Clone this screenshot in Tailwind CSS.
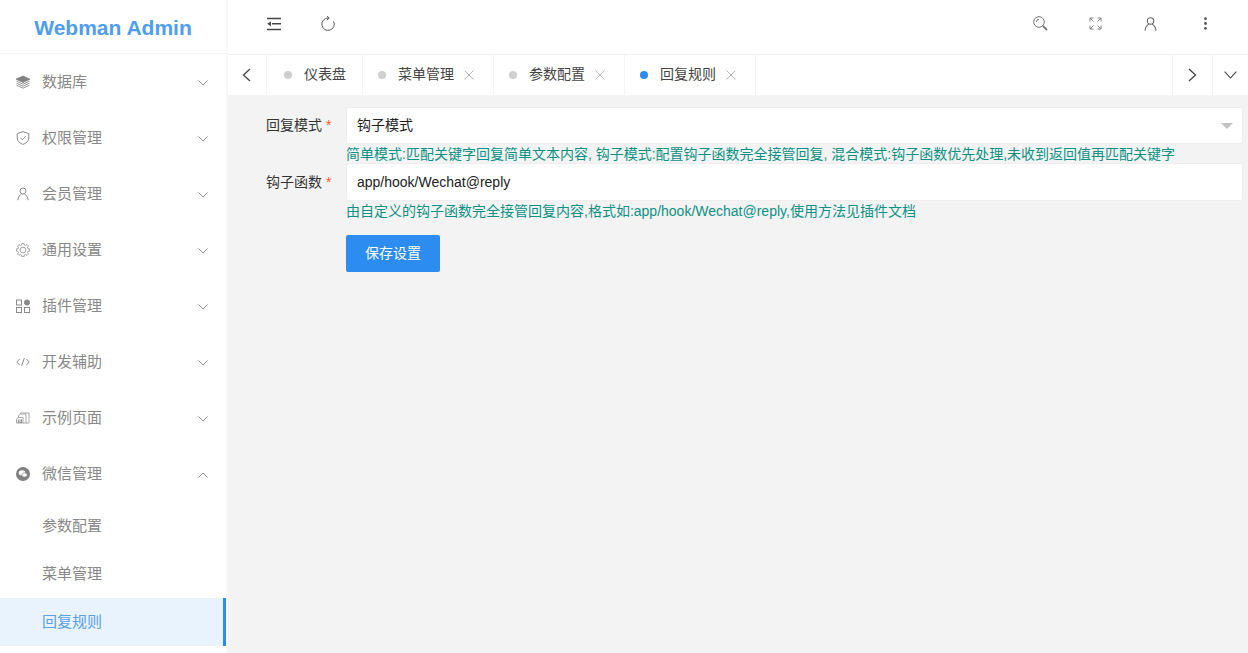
<!DOCTYPE html>
<html lang="zh">
<head>
<meta charset="utf-8">
<title>Webman Admin</title>
<script src="https://cdn.jsdelivr.net/npm/@tailwindcss/browser@4"></script>
</head>
<body class="m-0 overflow-hidden">
<div class="flex w-[1248px] h-[653px] overflow-hidden bg-[#f3f3f3] text-[14px] text-[#333] font-['Liberation_Sans','Noto_Sans_CJK_SC',sans-serif]">
  <aside class="w-[228px] shrink-0 h-full bg-white border-r-2 border-[#f8f8f8] flex flex-col">
    <div class="h-[54px] shrink-0 border-b border-[#f4f4f4] flex items-center justify-center text-[#4f9df0] text-[21px] font-bold pt-[3px]">Webman Admin</div>
    <nav class="flex flex-col text-[15px]">
      <div class="h-[56px] flex items-center pl-[16px] pr-[18px] text-[#888]">
        <svg class="w-[14px] h-[14px] mr-[12px]" viewBox="0 0 14 14" fill="none" stroke="#8a8a8a" stroke-width="0.9"><path d="M7 1 L14 4.2 L7 7.4 L0 4.2Z" fill="#808080"/><path d="M0.5 6.2 L7 9.2 L13.5 6.2M0.5 8.2 L7 11.2 L13.5 8.2M0.5 10.2 L7 13.2 L13.5 10.2"/></svg>
        <span class="flex-1">数据库</span>
        <svg class="w-[10px] h-[6px] mt-[2px]" viewBox="0 0 10 6" fill="none" stroke="#8f8f8f"><path d="M0.5 0.5 L5 5 L9.5 0.5"/></svg>
      </div>
      <div class="h-[56px] flex items-center pl-[16px] pr-[18px] text-[#888]">
        <svg class="w-[14px] h-[14px] mr-[12px]" viewBox="0 0 14 14" fill="none" stroke="#8a8a8a"><path d="M7 0.7 L12.8 2.6 V7 C12.8 10.2 10 12.3 7 13.4 C4 12.3 1.2 10.2 1.2 7 V2.6Z"/><path d="M4.4 6.8 L6.4 8.8 L9.8 5.2"/></svg>
        <span class="flex-1">权限管理</span>
        <svg class="w-[10px] h-[6px] mt-[2px]" viewBox="0 0 10 6" fill="none" stroke="#8f8f8f"><path d="M0.5 0.5 L5 5 L9.5 0.5"/></svg>
      </div>
      <div class="h-[56px] flex items-center pl-[16px] pr-[18px] text-[#888]">
        <svg class="w-[14px] h-[14px] mr-[12px]" viewBox="0 0 14 14" fill="none" stroke="#8a8a8a"><circle cx="7" cy="4" r="3"/><path d="M1.8 13.2 C2.2 9.8 4 7.6 5.4 7.1M12.2 13.2 C11.8 9.8 10 7.6 8.6 7.1"/></svg>
        <span class="flex-1">会员管理</span>
        <svg class="w-[10px] h-[6px] mt-[2px]" viewBox="0 0 10 6" fill="none" stroke="#8f8f8f"><path d="M0.5 0.5 L5 5 L9.5 0.5"/></svg>
      </div>
      <div class="h-[56px] flex items-center pl-[16px] pr-[18px] text-[#888]">
        <svg class="w-[14px] h-[14px] mr-[12px]" viewBox="0 0 14 14" fill="none" stroke="#8a8a8a" stroke-width="0.8"><path d="M13.72 5.94 V8.06 L12.05 8.26 L11.46 9.68 L12.5 11 L11 12.5 L9.68 11.46 L8.26 12.05 L8.06 13.72 H5.94 L5.74 12.05 L4.32 11.46 L3 12.5 L1.5 11 L2.54 9.68 L1.95 8.26 L0.28 8.06 V5.94 L1.95 5.74 L2.54 4.32 L1.5 3 L3 1.5 L4.32 2.54 L5.74 1.95 L5.94 0.28 H8.06 L8.26 1.95 L9.68 2.54 L11 1.5 L12.5 3 L11.46 4.32 L12.05 5.74Z"/><circle cx="7" cy="7" r="2.9"/></svg>
        <span class="flex-1">通用设置</span>
        <svg class="w-[10px] h-[6px] mt-[2px]" viewBox="0 0 10 6" fill="none" stroke="#8f8f8f"><path d="M0.5 0.5 L5 5 L9.5 0.5"/></svg>
      </div>
      <div class="h-[56px] flex items-center pl-[16px] pr-[18px] text-[#888]">
        <svg class="w-[14px] h-[14px] mr-[12px]" viewBox="0 0 14 14" fill="none" stroke="#8a8a8a"><rect x="0.5" y="1" width="5" height="5"/><rect x="0.5" y="8.5" width="5" height="5"/><rect x="8.5" y="8.5" width="5" height="5"/><circle cx="11" cy="3.5" r="2.6" fill="#8a8a8a"/></svg>
        <span class="flex-1">插件管理</span>
        <svg class="w-[10px] h-[6px] mt-[2px]" viewBox="0 0 10 6" fill="none" stroke="#8f8f8f"><path d="M0.5 0.5 L5 5 L9.5 0.5"/></svg>
      </div>
      <div class="h-[56px] flex items-center pl-[16px] pr-[18px] text-[#888]">
        <svg class="w-[14px] h-[14px] mr-[12px]" viewBox="0 0 14 14" fill="none" stroke="#8a8a8a"><path d="M3.6 4 L0.8 7 L3.6 10M10.4 4 L13.2 7 L10.4 10M8.4 3 L5.6 11"/></svg>
        <span class="flex-1">开发辅助</span>
        <svg class="w-[10px] h-[6px] mt-[2px]" viewBox="0 0 10 6" fill="none" stroke="#8f8f8f"><path d="M0.5 0.5 L5 5 L9.5 0.5"/></svg>
      </div>
      <div class="h-[56px] flex items-center pl-[16px] pr-[18px] text-[#888]">
        <svg class="w-[14px] h-[14px] mr-[12px]" viewBox="0 0 14 14" fill="none" stroke="#a0a0a0" stroke-width="0.9"><path d="M0.5 12 V8 L2.5 6.5 H7 V12 H0.5"/><path d="M2.5 6.5 V4.5 L4.5 3 H10 V12 H7"/><path d="M4.5 3 V2 H13 V12 H10"/><path d="M2.3 8.5 V12M4 8.5 V12M5.5 8.5 V12" stroke="#808080"/></svg>
        <span class="flex-1">示例页面</span>
        <svg class="w-[10px] h-[6px] mt-[2px]" viewBox="0 0 10 6" fill="none" stroke="#8f8f8f"><path d="M0.5 0.5 L5 5 L9.5 0.5"/></svg>
      </div>
      <div class="h-[56px] flex items-center pl-[16px] pr-[18px] text-[#888]">
        <svg class="w-[14px] h-[14px] mr-[12px]" viewBox="0 0 14 14"><circle cx="7" cy="7" r="7" fill="#808080"/><ellipse cx="6" cy="5.8" rx="3.3" ry="2.6" fill="#fff"/><ellipse cx="8.6" cy="8" rx="2.7" ry="2.1" fill="#fff" stroke="#808080" stroke-width="0.6"/></svg>
        <span class="flex-1">微信管理</span>
        <svg class="w-[10px] h-[6px] mt-[2px]" viewBox="0 0 10 6" fill="none" stroke="#8f8f8f"><path d="M0.5 5.5 L5 1 L9.5 5.5"/></svg>
      </div>
      <div class="h-[48px] flex items-center pl-[42px] text-[#888]">参数配置</div>
      <div class="h-[48px] flex items-center pl-[42px] text-[#888]">菜单管理</div>
      <div class="h-[48px] flex items-center pl-[42px] text-[#5b9fe6] bg-[#e8f3fd] border-r-[3px] border-[#2d8cf0]">回复规则</div>
    </nav>
  </aside>

  <main class="flex-1 min-w-0 flex flex-col">
    <header class="h-[55px] shrink-0 bg-white border-b border-[#f0f0f0] flex items-center pl-[38px] pr-[41px] pb-[7px]">
      <svg class="w-[16px] h-[14px]" viewBox="0 0 16 14" fill="none" stroke="#444" stroke-width="1.4"><path d="M1 1.5 H15M6 6.8 H15M1 12.5 H15"/><path d="M5 4.4 V9.2 L1.2 6.8Z" fill="#444" stroke="none"/></svg>
      <svg class="w-[16px] h-[16px] ml-[38px]" viewBox="0 0 16 16" fill="none" stroke="#555" stroke-width="1"><path d="M8.2 2 A6.2 6.2 0 1 0 13.6 5.4"/><path d="M6.8 0 L9.2 2.1 L6.8 4.2"/></svg>
      <div class="flex-1"></div>
      <svg class="w-[15px] h-[15px]" viewBox="0 0 15 15" fill="none" stroke="#777"><circle cx="6" cy="6" r="5.3"/><path d="M3.4 6 A2.6 2.6 0 0 1 6 3.4"/><path d="M10 10 L14 14" stroke-width="1.8"/></svg>
      <svg class="w-[13px] h-[13px] ml-[41px]" viewBox="0 0 13 13" fill="none" stroke="#777"><path d="M1 4.5 V1 H4.5M1 1 L4.5 4.5M12 4.5 V1 H8.5M12 1 L8.5 4.5M1 8.5 V12 H4.5M1 12 L4.5 8.5M12 8.5 V12 H8.5M12 12 L8.5 8.5" stroke-width="0.9"/></svg>
      <svg class="w-[13px] h-[14px] ml-[42px]" viewBox="0 0 13 14" fill="none" stroke="#666" stroke-width="1.1"><circle cx="6.5" cy="4" r="3.2"/><path d="M1 13.6 C1.4 10.2 3 8 5 7.2M12 13.6 C11.6 10.2 10 8 8 7.2"/></svg>
      <svg class="w-[3px] h-[13px] ml-[47px]" viewBox="0 0 3 13" fill="#555"><circle cx="1.5" cy="1.7" r="1.4"/><circle cx="1.5" cy="6.5" r="1.4"/><circle cx="1.5" cy="11.3" r="1.4"/></svg>
    </header>

    <div class="h-[40px] shrink-0 bg-white flex items-stretch text-[#444]">
      <div class="w-[39px] shrink-0 border-r border-[#f3f3f3] flex items-center justify-center pr-[2px] pb-[1px]">
        <svg class="w-[9px] h-[14px]" viewBox="0 0 9 14" fill="none" stroke="#444" stroke-width="1.3"><path d="M8 1 L1.5 7 L8 13"/></svg>
      </div>
      <div class="w-[96px] border-r border-[#f3f3f3] flex items-center pl-[17px] pb-[1px]">
        <span class="w-[8px] h-[8px] rounded-full bg-[#cfcfcf] mr-[12px]"></span><span>仪表盘</span>
      </div>
      <div class="w-[131px] border-r border-[#f3f3f3] flex items-center pl-[15px] pb-[1px]">
        <span class="w-[8px] h-[8px] rounded-full bg-[#cfcfcf] mr-[12px]"></span><span>菜单管理</span>
        <svg class="w-[10px] h-[10px] ml-[10px]" viewBox="0 0 10 10" stroke="#b5b5b5"><path d="M0.5 0.5 L9.5 9.5M9.5 0.5 L0.5 9.5"/></svg>
      </div>
      <div class="w-[131px] border-r border-[#f3f3f3] flex items-center pl-[15px] pb-[1px]">
        <span class="w-[8px] h-[8px] rounded-full bg-[#cfcfcf] mr-[12px]"></span><span>参数配置</span>
        <svg class="w-[10px] h-[10px] ml-[10px]" viewBox="0 0 10 10" stroke="#b5b5b5"><path d="M0.5 0.5 L9.5 9.5M9.5 0.5 L0.5 9.5"/></svg>
      </div>
      <div class="w-[131px] border-r border-[#f3f3f3] flex items-center pl-[15px] pb-[1px]">
        <span class="w-[8px] h-[8px] rounded-full bg-[#2d8cf0] mr-[12px]"></span><span>回复规则</span>
        <svg class="w-[10px] h-[10px] ml-[10px]" viewBox="0 0 10 10" stroke="#b5b5b5"><path d="M0.5 0.5 L9.5 9.5M9.5 0.5 L0.5 9.5"/></svg>
      </div>
      <div class="flex-1"></div>
      <div class="w-[40px] border-l border-[#f3f3f3] flex items-center justify-center pb-[1px]">
        <svg class="w-[9px] h-[14px]" viewBox="0 0 9 14" fill="none" stroke="#444" stroke-width="1.3"><path d="M1 1 L7.5 7 L1 13"/></svg>
      </div>
      <div class="w-[36px] border-l border-[#f3f3f3] flex items-center justify-center pb-[1px]">
        <svg class="w-[13px] h-[8px]" viewBox="0 0 13 8" fill="none" stroke="#444" stroke-width="1.1"><path d="M0.7 0.7 L6.5 7 L12.3 0.7"/></svg>
      </div>
    </div>

    <div class="flex-1 pt-[12px] pl-[38px] pr-[5px]">
      <div class="flex">
        <label class="w-[80px] shrink-0 pt-[8px] leading-[20px]">回复模式 <span class="text-[#ff5722]">*</span></label>
        <div class="flex-1 min-w-0">
          <div class="h-[37px] bg-white border border-[#eeeeee] rounded-[2px] flex items-center pl-[10px] pr-[9px] text-[#222]">
            <span class="flex-1">钩子模式</span>
            <span class="w-0 h-0 border-x-[6px] border-t-[6px] border-x-transparent border-t-[#c2c2c2]"></span>
          </div>
          <p class="h-[19px] leading-[20px] text-[#0b9184] whitespace-nowrap">简单模式:匹配关键字回复简单文本内容, 钩子模式:配置钩子函数完全接管回复, 混合模式:钩子函数优先处理,未收到返回值再匹配关键字</p>
        </div>
      </div>
      <div class="flex">
        <label class="w-[80px] shrink-0 pt-[9px] leading-[20px]">钩子函数 <span class="text-[#ff5722]">*</span></label>
        <div class="flex-1 min-w-0">
          <div class="h-[38px] bg-white border border-[#eeeeee] rounded-[2px] flex items-center pl-[10px] text-[#222]">app/hook/Wechat@reply</div>
          <p class="h-[20px] leading-[20px] text-[#0b9184] whitespace-nowrap">由自定义的钩子函数完全接管回复内容,格式如:app/hook/Wechat@reply,使用方法见插件文档</p>
          <button class="mt-[14px] w-[94px] h-[37px] bg-[#2d8cf0] text-white rounded-[2px] block">保存设置</button>
        </div>
      </div>
    </div>
  </main>
</div>
</body>
</html>
